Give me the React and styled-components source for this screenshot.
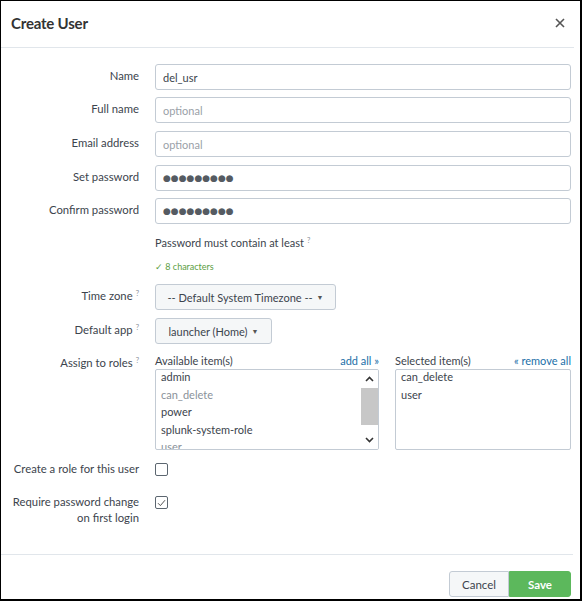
import React from 'react';
import styled, { createGlobalStyle } from 'styled-components';

const GlobalStyle = createGlobalStyle`
  html, body {
    margin: 0;
    padding: 0;
    background: #fff;
  }
  body {
    font-family: Lato, "Liberation Sans", sans-serif;
    color: #3c444d;
  }
`;

const Frame = styled.div`
  width: 582px;
  height: 601px;
  box-sizing: border-box;
  border: 1px solid #000;
  border-right-width: 2px;
  border-bottom-width: 2px;
  background: #fff;
  display: flex;
  flex-direction: column;
  overflow: hidden;
`;

const Header = styled.header`
  height: 43px;
  flex: none;
  display: flex;
  align-items: center;
  justify-content: space-between;
  padding: 0 8px 3px 10px;
  margin-right: 6px;
  border-bottom: 1px solid #e1e6eb;
`;

const Title = styled.h1`
  margin: 0;
  font-size: 15px;
  letter-spacing: -0.2px;
  font-weight: 700;
  color: #333;
`;

const Close = styled.button`
  border: 0;
  background: none;
  padding: 0;
  width: 12px;
  height: 12px;
  display: flex;
  align-items: center;
  justify-content: center;
  cursor: pointer;
`;

const Body = styled.div`
  flex: 1;
  padding: 16px 9px 0 0;
`;

const Row = styled.div`
  display: grid;
  grid-template-columns: 138px 1fr;
  column-gap: 16px;
  align-items: start;
  margin-top: ${(p) => p.$mt || 0}px;
`;

const Label = styled.label`
  text-align: right;
  font-size: 11.3px;
  line-height: 16px;
  color: #3c444d;
  padding-top: ${(p) => (p.$pt === undefined ? 4 : p.$pt)}px;
`;

const Help = styled.sup`
  font-size: 7.5px;
  line-height: 0;
  color: #8a929a;
  margin-left: 3px;
  vertical-align: 4px;
`;

const TextInput = styled.input`
  display: block;
  width: 100%;
  height: 26px;
  box-sizing: border-box;
  border: 1px solid #c3cbd4;
  border-radius: 3px;
  padding: 0 7px;
  font-family: Lato, "Liberation Sans", sans-serif;
  font-size: 11px;
  color: #3c444d;
  background: #fff;
  outline: none;
  &::placeholder {
    color: #9aa1a8;
  }
`;

const DotsInput = styled(TextInput)`
  font-family: "DejaVu Sans", sans-serif;
  font-size: 9px;
  letter-spacing: 0;
  color: #555b62;
`;

const Hint = styled.div`
  font-size: 11px;
  line-height: 16px;
  color: #3c444d;
`;

const Ok = styled.div`
  font-size: 9px;
  line-height: 14px;
  color: #5c9e3f;
`;

const Dropdown = styled.button`
  height: 26px;
  box-sizing: border-box;
  width: ${(p) => p.$w}px;
  border: 1px solid #c3cbd4;
  border-radius: 3px;
  background: #f5f7f8;
  font-family: Lato, "Liberation Sans", sans-serif;
  font-size: 11px;
  color: #3c444d;
  white-space: nowrap;
  display: flex;
  align-items: center;
  justify-content: center;
  gap: 4px;
  padding: 0 6px;
  cursor: pointer;
`;

const Caret = styled.span`
  font-size: 7px;
  color: #555;
`;

const Roles = styled.div`
  display: grid;
  grid-template-columns: 224px 1fr;
  column-gap: 16px;
`;

const ListHead = styled.div`
  display: flex;
  justify-content: space-between;
  font-size: 11px;
  line-height: 16px;
  color: #3c444d;
`;

const Link = styled.a`
  color: #1a6fa8;
  text-decoration: none;
  cursor: pointer;
`;

const ListBox = styled.div`
  height: 81px;
  box-sizing: border-box;
  border: 1px solid #c3cbd4;
  border-radius: 2px;
  display: flex;
  overflow: hidden;
`;

const Items = styled.ul`
  flex: 1;
  list-style: none;
  margin: -2px 0 0;
  padding: 0 0 0 5px;
`;

const Item = styled.li`
  font-size: 11px;
  line-height: 17.5px;
  color: ${(p) => (p.$off ? '#8a929a' : '#3c444d')};
  white-space: nowrap;
`;

const Scrollbar = styled.div`
  width: 18px;
  flex: none;
  display: flex;
  flex-direction: column;
  align-items: center;
  background: #fff;
`;

const Arrow = styled.div`
  height: 18px;
  width: 100%;
  display: flex;
  align-items: center;
  justify-content: center;
`;

const Thumb = styled.div`
  width: 17px;
  height: 37px;
  background: #c7c7c7;
`;

const Track = styled.div`
  flex: 1;
`;

const Check = styled.span`
  width: 13px;
  height: 13px;
  box-sizing: border-box;
  border: 1px solid #5c6670;
  border-radius: 2px;
  margin-top: 2px;
  display: flex;
  align-items: center;
  justify-content: center;
  background: #fff;
`;

const Footer = styled.footer`
  flex: none;
  height: 45px;
  box-sizing: border-box;
  border-top: 1px solid #e1e6eb;
  margin-right: 7px;
  padding: 16px 2px 0 0;
  display: flex;
  justify-content: flex-end;
  align-items: flex-start;
`;

const Button = styled.button`
  height: 26px;
  box-sizing: border-box;
  padding: 0 ${(p) => (p.$primary ? 18 : 12)}px;
  font-family: Lato, "Liberation Sans", sans-serif;
  font-size: 11.5px;
  font-weight: ${(p) => (p.$primary ? 700 : 400)};
  color: ${(p) => (p.$primary ? '#fff' : '#3c444d')};
  background: ${(p) => (p.$primary ? '#5cb85c' : '#f5f7f8')};
  border: 1px solid ${(p) => (p.$primary ? '#5cb85c' : '#c3cbd4')};
  border-radius: ${(p) => (p.$primary ? '0 3px 3px 0' : '3px 0 0 3px')};
  cursor: pointer;
`;

const Chevron = ({ up }) => (
  <svg width="9" height="6" viewBox="0 0 9 6">
    <path
      d={up ? 'M1 5 L4.5 1.5 L8 5' : 'M1 1 L4.5 4.5 L8 1'}
      fill="none"
      stroke="#333"
      strokeWidth="1.6"
    />
  </svg>
);

const available = [
  { name: 'admin' },
  { name: 'can_delete', off: true },
  { name: 'power' },
  { name: 'splunk-system-role' },
  { name: 'user', off: true },
];

const App = () => (
  <>
    <GlobalStyle />
    <Frame>
      <Header>
        <Title>Create User</Title>
        <Close aria-label="Close">
          <svg width="10" height="10" viewBox="0 0 10 10">
            <path d="M1 1 L9 9 M9 1 L1 9" stroke="#555" strokeWidth="1.6" />
          </svg>
        </Close>
      </Header>

      <Body>
        <Row>
          <Label>Name</Label>
          <TextInput defaultValue="del_usr" />
        </Row>
        <Row $mt={7}>
          <Label>Full name</Label>
          <TextInput placeholder="optional" />
        </Row>
        <Row $mt={8}>
          <Label>Email address</Label>
          <TextInput placeholder="optional" />
        </Row>
        <Row $mt={8}>
          <Label>Set password</Label>
          <DotsInput readOnly value="●●●●●●●●●" />
        </Row>
        <Row $mt={7}>
          <Label>Confirm password</Label>
          <DotsInput readOnly value="●●●●●●●●●" />
        </Row>

        <Row $mt={11}>
          <span />
          <Hint>
            Password must contain at least<Help>?</Help>
          </Hint>
        </Row>
        <Row $mt={9}>
          <span />
          <Ok>✓ 8 characters</Ok>
        </Row>

        <Row $mt={10}>
          <Label>
            Time zone<Help>?</Help>
          </Label>
          <Dropdown $w={181}>
            -- Default System Timezone -- <Caret>▼</Caret>
          </Dropdown>
        </Row>
        <Row $mt={8}>
          <Label>
            Default app<Help>?</Help>
          </Label>
          <Dropdown $w={117}>
            launcher (Home) <Caret>▼</Caret>
          </Dropdown>
        </Row>

        <Row $mt={9}>
          <Label $pt={2}>
            Assign to roles<Help>?</Help>
          </Label>
          <Roles>
            <div>
              <ListHead>
                <span>Available item(s)</span>
                <Link>add all »</Link>
              </ListHead>
              <ListBox>
                <Items>
                  {available.map((r) => (
                    <Item key={r.name} $off={r.off}>
                      {r.name}
                    </Item>
                  ))}
                </Items>
                <Scrollbar>
                  <Arrow>
                    <Chevron up />
                  </Arrow>
                  <Thumb />
                  <Track />
                  <Arrow>
                    <Chevron />
                  </Arrow>
                </Scrollbar>
              </ListBox>
            </div>
            <div>
              <ListHead>
                <span>Selected item(s)</span>
                <Link>« remove all</Link>
              </ListHead>
              <ListBox>
                <Items>
                  <Item>can_delete</Item>
                  <Item>user</Item>
                </Items>
              </ListBox>
            </div>
          </Roles>
        </Row>

        <Row $mt={11}>
          <Label $pt={0}>Create a role for this user</Label>
          <Check />
        </Row>
        <Row $mt={17}>
          <Label $pt={0}>
            Require password change
            <br />
            on first login
          </Label>
          <Check>
            <svg width="9" height="8" viewBox="0 0 9 8">
              <path d="M1 4.2 L3.4 6.6 L8 1.2" fill="none" stroke="#555" strokeWidth="1" />
            </svg>
          </Check>
        </Row>
      </Body>

      <Footer>
        <Button>Cancel</Button>
        <Button $primary>Save</Button>
      </Footer>
    </Frame>
  </>
);

export default App;
